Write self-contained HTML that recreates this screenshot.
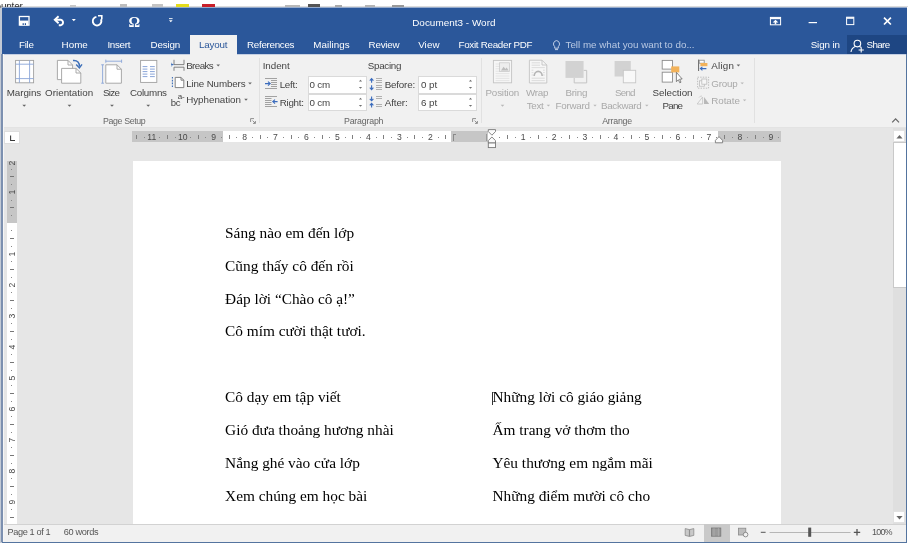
<!DOCTYPE html>
<html><head><meta charset="utf-8"><title>Document3 - Word</title>
<style>
*{margin:0;padding:0;box-sizing:border-box}
html,body{width:916px;height:548px;overflow:hidden;background:#fff}
body{position:relative;font-family:"Liberation Sans",sans-serif;}
.a,.t,.d,svg{position:absolute}
.t{white-space:nowrap;line-height:1;font-family:"Liberation Sans",sans-serif}
.d{white-space:nowrap;line-height:1;font-family:"Liberation Serif",serif;font-size:15.33px;color:#000}

.bx{position:absolute}
.inp{position:absolute;background:#fff;border:1px solid #dadada}
.rn{position:absolute;font-size:8.6px;line-height:1;color:#4a4a4a;white-space:nowrap;font-family:"Liberation Sans",sans-serif;transform:translate(-50%,0)}
.vn{position:absolute;font-size:8.6px;line-height:1;color:#4a4a4a;white-space:nowrap;font-family:"Liberation Sans",sans-serif;transform:translate(-50%,-50%) rotate(-90deg)}

#wrap{position:absolute;left:0;top:0;width:916px;height:548px;overflow:hidden;filter:blur(0.45px)}
</style></head><body><div id="wrap">
<div class="bx" style="left:0px;top:6px;width:908.00px;height:1.00px;background:#dcdcdc;"></div>
<span class="t" style="left:-11.5px;top:1.6px;font-size:10px;color:#333;letter-spacing:-0.2px">Counter</span>
<div class="bx" style="left:176.4px;top:4.4px;width:12.40px;height:3.10px;background:#e4dc1c;"></div>
<div class="bx" style="left:202px;top:4.4px;width:13.00px;height:3.10px;background:#c8202a;"></div>
<div class="bx" style="left:70px;top:4.5px;width:6.00px;height:2.00px;background:#c8c8c8;"></div>
<div class="bx" style="left:120px;top:4px;width:7.00px;height:2.50px;background:#bdbdbd;"></div>
<div class="bx" style="left:152px;top:4px;width:11.00px;height:2.50px;background:#c4c4c4;"></div>
<div class="bx" style="left:285px;top:4.5px;width:15.00px;height:2.00px;background:#b8b8b8;"></div>
<div class="bx" style="left:308px;top:4px;width:12.00px;height:2.50px;background:#555;"></div>
<div class="bx" style="left:335px;top:4.5px;width:7.00px;height:2.00px;background:#aaa;"></div>
<div class="bx" style="left:365px;top:4.5px;width:10.00px;height:2.00px;background:#b5b5b5;"></div>
<div class="bx" style="left:392px;top:4.5px;width:12.00px;height:2.00px;background:#999;"></div>
<div class="bx" style="left:0px;top:8px;width:2.00px;height:535.00px;background:#c3cad5;"></div>
<div class="bx" style="left:2px;top:8px;width:905.40px;height:534.60px;background:#54749f;"></div>
<div class="bx" style="left:1px;top:54px;width:2.00px;height:488.00px;background:#7c90b0;"></div>
<div class="bx" style="left:3px;top:54px;width:0.70px;height:487.60px;background:#f6f6f6;"></div>
<div class="bx" style="left:3.6px;top:7.5px;width:902.60px;height:534.00px;background:#f1f1f1;"></div>
<div class="bx" style="left:2px;top:7px;width:905.00px;height:1.00px;background:#95abcd;"></div>
<div class="bx" style="left:2px;top:8px;width:905.00px;height:46.00px;background:#2b579a;"></div>
<div class="bx" style="left:190px;top:35px;width:47.00px;height:19.00px;background:#f1f1f1;"></div>
<div class="bx" style="left:847px;top:35px;width:60.00px;height:19.00px;background:#1e4683;"></div>
<div class="bx" style="left:4px;top:54px;width:186.00px;height:1.00px;background:#c4cfe3;"></div>
<div class="bx" style="left:237px;top:54px;width:669.00px;height:1.00px;background:#c4cfe3;"></div>
<div class="bx" style="left:3.6px;top:127px;width:902.60px;height:1.00px;background:#e3e3e3;"></div>
<div class="bx" style="left:3.6px;top:128px;width:902.60px;height:396.00px;background:#e6e6e6;"></div>
<div class="bx" style="left:132.6px;top:161px;width:648.70px;height:363.00px;background:#fff;"></div>
<div class="bx" style="left:3.6px;top:524px;width:902.60px;height:17.60px;background:#f1f1f1;"></div>
<div class="bx" style="left:3.6px;top:523.6px;width:902.60px;height:0.80px;background:#d2d2d2;"></div>
<div class="bx" style="left:703.8px;top:524.4px;width:26.00px;height:17.20px;background:#c9c9c9;"></div>
<div class="bx" style="left:258.5px;top:58px;width:1.00px;height:65.00px;background:#e1e1e1;"></div>
<div class="bx" style="left:480.5px;top:58px;width:1.00px;height:65.00px;background:#e1e1e1;"></div>
<div class="bx" style="left:753.5px;top:58px;width:1.00px;height:65.00px;background:#e1e1e1;"></div>
<div class="inp" style="left:307.8px;top:76px;width:59.4px;height:17.6px"></div>
<div class="inp" style="left:307.8px;top:93.6px;width:59.4px;height:17.6px"></div>
<svg style="left:358.09999999999997px;top:79.1px;" width="5" height="11" viewBox="0 0 5 11"><path d="M0.9 2.5 L2.5 0.8 L4.1 2.5Z M0.9 8.1 L2.5 9.8 L4.1 8.1Z" fill="#707070"/></svg>
<svg style="left:358.09999999999997px;top:96.7px;" width="5" height="11" viewBox="0 0 5 11"><path d="M0.9 2.5 L2.5 0.8 L4.1 2.5Z M0.9 8.1 L2.5 9.8 L4.1 8.1Z" fill="#707070"/></svg>
<div class="inp" style="left:418.3px;top:76px;width:58.7px;height:17.6px"></div>
<div class="inp" style="left:418.3px;top:93.6px;width:58.7px;height:17.6px"></div>
<svg style="left:467.9px;top:79.1px;" width="5" height="11" viewBox="0 0 5 11"><path d="M0.9 2.5 L2.5 0.8 L4.1 2.5Z M0.9 8.1 L2.5 9.8 L4.1 8.1Z" fill="#707070"/></svg>
<svg style="left:467.9px;top:96.7px;" width="5" height="11" viewBox="0 0 5 11"><path d="M0.9 2.5 L2.5 0.8 L4.1 2.5Z M0.9 8.1 L2.5 9.8 L4.1 8.1Z" fill="#707070"/></svg>
<div class="bx" style="left:132.2px;top:131.4px;width:649.00px;height:10.50px;background:#fff;"></div>
<div class="bx" style="left:132.2px;top:131.4px;width:91.20px;height:10.50px;background:#c6c6c6;"></div>
<div class="bx" style="left:451.4px;top:131.4px;width:36.50px;height:10.50px;background:#c6c6c6;"></div>
<div class="bx" style="left:718.2px;top:131.4px;width:63.00px;height:10.50px;background:#c6c6c6;"></div>
<div class="bx" style="left:445.3px;top:135px;width:1.00px;height:4.20px;background:#808080;"></div>
<div class="bx" style="left:437.5px;top:136.6px;width:1.00px;height:1.10px;background:#8a8a8a;"></div>
<span class="rn" style="left:430.3px;top:132.8px">2</span>
<div class="bx" style="left:422.1px;top:136.6px;width:1.00px;height:1.10px;background:#8a8a8a;"></div>
<div class="bx" style="left:414.3px;top:135px;width:1.00px;height:4.20px;background:#808080;"></div>
<div class="bx" style="left:406.6px;top:136.6px;width:1.00px;height:1.10px;background:#8a8a8a;"></div>
<span class="rn" style="left:399.4px;top:132.8px">3</span>
<div class="bx" style="left:391.1px;top:136.6px;width:1.00px;height:1.10px;background:#8a8a8a;"></div>
<div class="bx" style="left:383.4px;top:135px;width:1.00px;height:4.20px;background:#808080;"></div>
<div class="bx" style="left:375.6px;top:136.6px;width:1.00px;height:1.10px;background:#8a8a8a;"></div>
<span class="rn" style="left:368.4px;top:132.8px">4</span>
<div class="bx" style="left:360.2px;top:136.6px;width:1.00px;height:1.10px;background:#8a8a8a;"></div>
<div class="bx" style="left:352.4px;top:135px;width:1.00px;height:4.20px;background:#808080;"></div>
<div class="bx" style="left:344.7px;top:136.6px;width:1.00px;height:1.10px;background:#8a8a8a;"></div>
<span class="rn" style="left:337.4px;top:132.8px">5</span>
<div class="bx" style="left:329.2px;top:136.6px;width:1.00px;height:1.10px;background:#8a8a8a;"></div>
<div class="bx" style="left:321.5px;top:135px;width:1.00px;height:4.20px;background:#808080;"></div>
<div class="bx" style="left:313.7px;top:136.6px;width:1.00px;height:1.10px;background:#8a8a8a;"></div>
<span class="rn" style="left:306.5px;top:132.8px">6</span>
<div class="bx" style="left:298.3px;top:136.6px;width:1.00px;height:1.10px;background:#8a8a8a;"></div>
<div class="bx" style="left:290.5px;top:135px;width:1.00px;height:4.20px;background:#808080;"></div>
<div class="bx" style="left:282.8px;top:136.6px;width:1.00px;height:1.10px;background:#8a8a8a;"></div>
<span class="rn" style="left:275.5px;top:132.8px">7</span>
<div class="bx" style="left:267.3px;top:136.6px;width:1.00px;height:1.10px;background:#8a8a8a;"></div>
<div class="bx" style="left:259.6px;top:135px;width:1.00px;height:4.20px;background:#808080;"></div>
<div class="bx" style="left:251.8px;top:136.6px;width:1.00px;height:1.10px;background:#8a8a8a;"></div>
<span class="rn" style="left:244.6px;top:132.8px">8</span>
<div class="bx" style="left:236.4px;top:136.6px;width:1.00px;height:1.10px;background:#8a8a8a;"></div>
<div class="bx" style="left:228.6px;top:135px;width:1.00px;height:4.20px;background:#808080;"></div>
<div class="bx" style="left:220.9px;top:136.6px;width:1.00px;height:1.10px;background:#8a8a8a;"></div>
<span class="rn" style="left:213.6px;top:132.8px">9</span>
<div class="bx" style="left:205.4px;top:136.6px;width:1.00px;height:1.10px;background:#8a8a8a;"></div>
<div class="bx" style="left:197.7px;top:135px;width:1.00px;height:4.20px;background:#808080;"></div>
<div class="bx" style="left:189.9px;top:136.6px;width:1.00px;height:1.10px;background:#8a8a8a;"></div>
<span class="rn" style="left:182.7px;top:132.8px">10</span>
<div class="bx" style="left:174.5px;top:136.6px;width:1.00px;height:1.10px;background:#8a8a8a;"></div>
<div class="bx" style="left:166.7px;top:135px;width:1.00px;height:4.20px;background:#808080;"></div>
<div class="bx" style="left:159.0px;top:136.6px;width:1.00px;height:1.10px;background:#8a8a8a;"></div>
<span class="rn" style="left:151.8px;top:132.8px">11</span>
<div class="bx" style="left:143.5px;top:136.6px;width:1.00px;height:1.10px;background:#8a8a8a;"></div>
<div class="bx" style="left:135.8px;top:135px;width:1.00px;height:4.20px;background:#808080;"></div>
<div class="bx" style="left:499.4px;top:136.6px;width:1.00px;height:1.10px;background:#8a8a8a;"></div>
<div class="bx" style="left:507.2px;top:135px;width:1.00px;height:4.20px;background:#808080;"></div>
<div class="bx" style="left:514.9px;top:136.6px;width:1.00px;height:1.10px;background:#8a8a8a;"></div>
<span class="rn" style="left:523.1px;top:132.8px">1</span>
<div class="bx" style="left:530.4px;top:136.6px;width:1.00px;height:1.10px;background:#8a8a8a;"></div>
<div class="bx" style="left:538.1px;top:135px;width:1.00px;height:4.20px;background:#808080;"></div>
<div class="bx" style="left:545.9px;top:136.6px;width:1.00px;height:1.10px;background:#8a8a8a;"></div>
<span class="rn" style="left:554.1px;top:132.8px">2</span>
<div class="bx" style="left:561.3px;top:136.6px;width:1.00px;height:1.10px;background:#8a8a8a;"></div>
<div class="bx" style="left:569.1px;top:135px;width:1.00px;height:4.20px;background:#808080;"></div>
<div class="bx" style="left:576.8px;top:136.6px;width:1.00px;height:1.10px;background:#8a8a8a;"></div>
<span class="rn" style="left:585.0px;top:132.8px">3</span>
<div class="bx" style="left:592.3px;top:136.6px;width:1.00px;height:1.10px;background:#8a8a8a;"></div>
<div class="bx" style="left:600.0px;top:135px;width:1.00px;height:4.20px;background:#808080;"></div>
<div class="bx" style="left:607.8px;top:136.6px;width:1.00px;height:1.10px;background:#8a8a8a;"></div>
<span class="rn" style="left:616.0px;top:132.8px">4</span>
<div class="bx" style="left:623.2px;top:136.6px;width:1.00px;height:1.10px;background:#8a8a8a;"></div>
<div class="bx" style="left:631.0px;top:135px;width:1.00px;height:4.20px;background:#808080;"></div>
<div class="bx" style="left:638.7px;top:136.6px;width:1.00px;height:1.10px;background:#8a8a8a;"></div>
<span class="rn" style="left:647.0px;top:132.8px">5</span>
<div class="bx" style="left:654.2px;top:136.6px;width:1.00px;height:1.10px;background:#8a8a8a;"></div>
<div class="bx" style="left:661.9px;top:135px;width:1.00px;height:4.20px;background:#808080;"></div>
<div class="bx" style="left:669.7px;top:136.6px;width:1.00px;height:1.10px;background:#8a8a8a;"></div>
<span class="rn" style="left:677.9px;top:132.8px">6</span>
<div class="bx" style="left:685.1px;top:136.6px;width:1.00px;height:1.10px;background:#8a8a8a;"></div>
<div class="bx" style="left:692.9px;top:135px;width:1.00px;height:4.20px;background:#808080;"></div>
<div class="bx" style="left:700.6px;top:136.6px;width:1.00px;height:1.10px;background:#8a8a8a;"></div>
<span class="rn" style="left:708.9px;top:132.8px">7</span>
<div class="bx" style="left:716.1px;top:136.6px;width:1.00px;height:1.10px;background:#8a8a8a;"></div>
<div class="bx" style="left:723.8px;top:135px;width:1.00px;height:4.20px;background:#808080;"></div>
<div class="bx" style="left:731.6px;top:136.6px;width:1.00px;height:1.10px;background:#8a8a8a;"></div>
<span class="rn" style="left:739.8px;top:132.8px">8</span>
<div class="bx" style="left:747.0px;top:136.6px;width:1.00px;height:1.10px;background:#8a8a8a;"></div>
<div class="bx" style="left:754.8px;top:135px;width:1.00px;height:4.20px;background:#808080;"></div>
<div class="bx" style="left:762.5px;top:136.6px;width:1.00px;height:1.10px;background:#8a8a8a;"></div>
<span class="rn" style="left:770.8px;top:132.8px">9</span>
<div class="bx" style="left:778.0px;top:136.6px;width:1.00px;height:1.10px;background:#8a8a8a;"></div>
<div class="bx" style="left:6.6px;top:160.5px;width:10.40px;height:363.50px;background:#fff;"></div>
<div class="bx" style="left:6.6px;top:160.5px;width:10.40px;height:62.50px;background:#c6c6c6;"></div>
<span class="vn" style="left:11.8px;top:163.4px">2</span>
<div class="bx" style="left:11.3px;top:168.5px;width:1.10px;height:1.00px;background:#888;"></div>
<div class="bx" style="left:9.6px;top:176.3px;width:4.40px;height:1.00px;background:#777;"></div>
<div class="bx" style="left:11.3px;top:184.0px;width:1.10px;height:1.00px;background:#888;"></div>
<span class="vn" style="left:11.8px;top:192.2px">1</span>
<div class="bx" style="left:11.3px;top:199.5px;width:1.10px;height:1.00px;background:#888;"></div>
<div class="bx" style="left:9.6px;top:207.2px;width:4.40px;height:1.00px;background:#777;"></div>
<div class="bx" style="left:11.3px;top:215.0px;width:1.10px;height:1.00px;background:#888;"></div>
<div class="bx" style="left:11.3px;top:230.4px;width:1.10px;height:1.00px;background:#888;"></div>
<div class="bx" style="left:9.6px;top:238.2px;width:4.40px;height:1.00px;background:#777;"></div>
<div class="bx" style="left:11.3px;top:245.9px;width:1.10px;height:1.00px;background:#888;"></div>
<span class="vn" style="left:11.8px;top:254.1px">1</span>
<div class="bx" style="left:11.3px;top:261.4px;width:1.10px;height:1.00px;background:#888;"></div>
<div class="bx" style="left:9.6px;top:269.1px;width:4.40px;height:1.00px;background:#777;"></div>
<div class="bx" style="left:11.3px;top:276.9px;width:1.10px;height:1.00px;background:#888;"></div>
<span class="vn" style="left:11.8px;top:285.1px">2</span>
<div class="bx" style="left:11.3px;top:292.3px;width:1.10px;height:1.00px;background:#888;"></div>
<div class="bx" style="left:9.6px;top:300.1px;width:4.40px;height:1.00px;background:#777;"></div>
<div class="bx" style="left:11.3px;top:307.8px;width:1.10px;height:1.00px;background:#888;"></div>
<span class="vn" style="left:11.8px;top:316.0px">3</span>
<div class="bx" style="left:11.3px;top:323.3px;width:1.10px;height:1.00px;background:#888;"></div>
<div class="bx" style="left:9.6px;top:331.0px;width:4.40px;height:1.00px;background:#777;"></div>
<div class="bx" style="left:11.3px;top:338.8px;width:1.10px;height:1.00px;background:#888;"></div>
<span class="vn" style="left:11.8px;top:347.0px">4</span>
<div class="bx" style="left:11.3px;top:354.2px;width:1.10px;height:1.00px;background:#888;"></div>
<div class="bx" style="left:9.6px;top:362.0px;width:4.40px;height:1.00px;background:#777;"></div>
<div class="bx" style="left:11.3px;top:369.7px;width:1.10px;height:1.00px;background:#888;"></div>
<span class="vn" style="left:11.8px;top:377.9px">5</span>
<div class="bx" style="left:11.3px;top:385.2px;width:1.10px;height:1.00px;background:#888;"></div>
<div class="bx" style="left:9.6px;top:392.9px;width:4.40px;height:1.00px;background:#777;"></div>
<div class="bx" style="left:11.3px;top:400.7px;width:1.10px;height:1.00px;background:#888;"></div>
<span class="vn" style="left:11.8px;top:408.9px">6</span>
<div class="bx" style="left:11.3px;top:416.1px;width:1.10px;height:1.00px;background:#888;"></div>
<div class="bx" style="left:9.6px;top:423.9px;width:4.40px;height:1.00px;background:#777;"></div>
<div class="bx" style="left:11.3px;top:431.6px;width:1.10px;height:1.00px;background:#888;"></div>
<span class="vn" style="left:11.8px;top:439.9px">7</span>
<div class="bx" style="left:11.3px;top:447.1px;width:1.10px;height:1.00px;background:#888;"></div>
<div class="bx" style="left:9.6px;top:454.8px;width:4.40px;height:1.00px;background:#777;"></div>
<div class="bx" style="left:11.3px;top:462.6px;width:1.10px;height:1.00px;background:#888;"></div>
<span class="vn" style="left:11.8px;top:470.8px">8</span>
<div class="bx" style="left:11.3px;top:478.0px;width:1.10px;height:1.00px;background:#888;"></div>
<div class="bx" style="left:9.6px;top:485.8px;width:4.40px;height:1.00px;background:#777;"></div>
<div class="bx" style="left:11.3px;top:493.5px;width:1.10px;height:1.00px;background:#888;"></div>
<span class="vn" style="left:11.8px;top:501.8px">9</span>
<div class="bx" style="left:11.3px;top:509.0px;width:1.10px;height:1.00px;background:#888;"></div>
<div class="bx" style="left:9.6px;top:516.7px;width:4.40px;height:1.00px;background:#777;"></div>
<div class="bx" style="left:4px;top:130.6px;width:15.80px;height:13.20px;background:#fff;border:1px solid #dedede"></div>
<svg style="left:8.6px;top:133.8px;" width="8" height="8" viewBox="0 0 8 8"><path d="M1.6 1.6 V6.4 H6" fill="none" stroke="#3a3a3a" stroke-width="1.05"/></svg>
<svg style="left:487px;top:128px;" width="10" height="21" viewBox="0 0 10 21"><path d="M1.3 1.6 H8.5 V3.6 L4.9 7.2 L1.3 3.6Z" fill="#fbfbfb" stroke="#777" stroke-width="0.9"/>
<path d="M1.3 15 V12.6 L4.9 9 L8.5 12.6 V15Z" fill="#fbfbfb" stroke="#777" stroke-width="0.9"/>
<rect x="1.3" y="15" width="7.2" height="4.6" fill="#fbfbfb" stroke="#777" stroke-width="0.9"/></svg>
<svg style="left:714px;top:134px;" width="10" height="10" viewBox="0 0 10 10"><path d="M1.4 8.8 V6.4 L5 2.6 L8.6 6.4 V8.8Z" fill="#fbfbfb" stroke="#777" stroke-width="0.9"/></svg>
<div class="bx" style="left:452.8px;top:134px;width:1.00px;height:7.00px;background:#8a8a8a;"></div>
<div class="bx" style="left:452.8px;top:134px;width:3.20px;height:1.00px;background:#8a8a8a;"></div>
<div class="bx" style="left:486px;top:134px;width:1.00px;height:7.00px;background:#9a9a9a;"></div>
<div class="bx" style="left:892.6px;top:128px;width:13.60px;height:396.00px;background:#dfdfdf;"></div>
<div class="bx" style="left:893.4px;top:130px;width:12.00px;height:12.40px;background:#fff;border:1px solid #e2e2e2"></div>
<div class="bx" style="left:893.4px;top:142.4px;width:12.80px;height:145.60px;background:#fff;border:1px solid #c9c9c9;border-right:none"></div>
<div class="bx" style="left:893.4px;top:511px;width:12.00px;height:11.60px;background:#fff;border:1px solid #e2e2e2"></div>
<svg style="left:896px;top:133.5px;" width="7" height="6" viewBox="0 0 7 6"><path d="M0.4 4.6 L3.5 1 L6.6 4.6Z" fill="#666"/></svg>
<svg style="left:896px;top:514.5px;" width="7" height="6" viewBox="0 0 7 6"><path d="M0.4 1 L3.5 4.6 L6.6 1Z" fill="#666"/></svg>
<span class="t" style="left:412.2px;top:17.6px;font-size:9.9px;color:#fff;letter-spacing:0.04px;">Document3 - Word</span>
<span class="t" style="left:18.9px;top:40.1px;font-size:9.8px;color:#fff;letter-spacing:-0.23px;">File</span>
<span class="t" style="left:61.6px;top:40.1px;font-size:9.8px;color:#fff;letter-spacing:0.02px;">Home</span>
<span class="t" style="left:107.4px;top:40.1px;font-size:9.8px;color:#fff;letter-spacing:-0.28px;">Insert</span>
<span class="t" style="left:150.6px;top:40.1px;font-size:9.8px;color:#fff;letter-spacing:-0.18px;">Design</span>
<span class="t" style="left:199.1px;top:40.1px;font-size:9.8px;color:#2b579a;letter-spacing:-0.22px;">Layout</span>
<span class="t" style="left:247.0px;top:40.1px;font-size:9.8px;color:#fff;letter-spacing:-0.29px;">References</span>
<span class="t" style="left:313.2px;top:40.1px;font-size:9.8px;color:#fff;letter-spacing:0.08px;">Mailings</span>
<span class="t" style="left:368.5px;top:40.1px;font-size:9.8px;color:#fff;letter-spacing:-0.19px;">Review</span>
<span class="t" style="left:418.2px;top:40.1px;font-size:9.8px;color:#fff;letter-spacing:0.08px;">View</span>
<span class="t" style="left:458.5px;top:40.1px;font-size:9.8px;color:#fff;letter-spacing:-0.29px;">Foxit Reader PDF</span>
<span class="t" style="left:565.5px;top:40.1px;font-size:9.8px;color:#b9c9e3;letter-spacing:-0.00px;">Tell me what you want to do...</span>
<span class="t" style="left:810.7px;top:40.1px;font-size:9.8px;color:#fff;letter-spacing:-0.11px;">Sign in</span>
<span class="t" style="left:866.5px;top:40.1px;font-size:9.8px;color:#fff;letter-spacing:-0.61px;">Share</span>
<span class="t" style="left:6.7px;top:88.2px;font-size:9.8px;color:#444;letter-spacing:-0.06px;">Margins</span>
<span class="t" style="left:45.0px;top:88.2px;font-size:9.8px;color:#444;letter-spacing:0.03px;">Orientation</span>
<span class="t" style="left:103.0px;top:88.2px;font-size:9.8px;color:#444;letter-spacing:-0.69px;">Size</span>
<span class="t" style="left:130.0px;top:88.2px;font-size:9.8px;color:#444;letter-spacing:-0.28px;">Columns</span>
<span class="t" style="left:186.2px;top:61.2px;font-size:9.8px;color:#444;letter-spacing:-0.60px;">Breaks</span>
<span class="t" style="left:186.2px;top:79.2px;font-size:9.8px;color:#444;letter-spacing:-0.15px;">Line Numbers</span>
<span class="t" style="left:186.2px;top:95.4px;font-size:9.8px;color:#444;letter-spacing:-0.02px;">Hyphenation</span>
<span class="t" style="left:103.0px;top:116.6px;font-size:8.8px;color:#666;letter-spacing:-0.36px;">Page Setup</span>
<span class="t" style="left:262.7px;top:61.2px;font-size:9.8px;color:#444;letter-spacing:-0.05px;">Indent</span>
<span class="t" style="left:279.7px;top:79.9px;font-size:9.8px;color:#444;letter-spacing:-0.27px;">Left:</span>
<span class="t" style="left:279.7px;top:97.9px;font-size:9.8px;color:#444;letter-spacing:-0.26px;">Right:</span>
<span class="t" style="left:309.5px;top:79.9px;font-size:9.8px;color:#444;letter-spacing:-0.18px;">0 cm</span>
<span class="t" style="left:309.5px;top:97.9px;font-size:9.8px;color:#444;letter-spacing:-0.18px;">0 cm</span>
<span class="t" style="left:367.7px;top:61.2px;font-size:9.8px;color:#444;letter-spacing:-0.27px;">Spacing</span>
<span class="t" style="left:384.7px;top:79.9px;font-size:9.8px;color:#444;letter-spacing:-0.18px;">Before:</span>
<span class="t" style="left:384.7px;top:97.9px;font-size:9.8px;color:#444;letter-spacing:-0.08px;">After:</span>
<span class="t" style="left:421.0px;top:79.9px;font-size:9.8px;color:#444;letter-spacing:-0.05px;">0 pt</span>
<span class="t" style="left:421.0px;top:97.9px;font-size:9.8px;color:#444;letter-spacing:-0.05px;">6 pt</span>
<span class="t" style="left:344.0px;top:116.6px;font-size:8.8px;color:#666;letter-spacing:-0.20px;">Paragraph</span>
<span class="t" style="left:485.5px;top:88.2px;font-size:9.8px;color:#a9a9a9;letter-spacing:-0.17px;">Position</span>
<span class="t" style="left:526.0px;top:88.2px;font-size:9.8px;color:#a9a9a9;letter-spacing:-0.24px;">Wrap</span>
<span class="t" style="left:526.7px;top:101.2px;font-size:9.8px;color:#a9a9a9;letter-spacing:-0.32px;">Text</span>
<span class="t" style="left:565.5px;top:88.2px;font-size:9.8px;color:#a9a9a9;letter-spacing:-0.22px;">Bring</span>
<span class="t" style="left:555.5px;top:101.2px;font-size:9.8px;color:#a9a9a9;letter-spacing:-0.24px;">Forward</span>
<span class="t" style="left:615.0px;top:88.2px;font-size:9.8px;color:#a9a9a9;letter-spacing:-0.80px;">Send</span>
<span class="t" style="left:601.0px;top:101.2px;font-size:9.8px;color:#a9a9a9;letter-spacing:-0.33px;">Backward</span>
<span class="t" style="left:652.5px;top:88.2px;font-size:9.8px;color:#444;letter-spacing:-0.04px;">Selection</span>
<span class="t" style="left:662.5px;top:101.2px;font-size:9.8px;color:#444;letter-spacing:-0.80px;">Pane</span>
<span class="t" style="left:602.2px;top:116.6px;font-size:8.8px;color:#666;letter-spacing:-0.22px;">Arrange</span>
<span class="t" style="left:711.2px;top:61.2px;font-size:9.8px;color:#444;letter-spacing:0.25px;">Align</span>
<span class="t" style="left:711.2px;top:79.2px;font-size:9.8px;color:#a9a9a9;letter-spacing:-0.18px;">Group</span>
<span class="t" style="left:711.2px;top:96.2px;font-size:9.8px;color:#a9a9a9;letter-spacing:-0.02px;">Rotate</span>
<span class="t" style="left:7.5px;top:528.4px;font-size:9.2px;color:#555;letter-spacing:-0.38px;">Page 1 of 1</span>
<span class="t" style="left:63.7px;top:528.4px;font-size:9.2px;color:#555;letter-spacing:-0.33px;">60 words</span>
<span class="t" style="left:872.0px;top:528.0px;font-size:9.0px;color:#555;letter-spacing:-0.80px;">100%</span>
<span class="d" style="left:225.1px;top:225.3px">Sáng nào em đến lớp</span>
<span class="d" style="left:225.1px;top:257.9px">Cũng thấy cô đến rồi</span>
<span class="d" style="left:225.1px;top:290.5px">Đáp lời “Chào cô ạ!”</span>
<span class="d" style="left:225.1px;top:323.1px">Cô mím cười thật tươi.</span>
<span class="d" style="left:225.1px;top:389.3px">Cô dạy em tập viết</span>
<span class="d" style="left:225.1px;top:422.2px">Gió đưa thoảng hương nhài</span>
<span class="d" style="left:225.1px;top:454.8px">Nắng ghé vào cửa lớp</span>
<span class="d" style="left:225.1px;top:487.8px">Xem chúng em học bài</span>
<span class="d" style="left:492.5px;top:389.3px">Những lời cô giáo giảng</span>
<span class="d" style="left:492.5px;top:422.2px">Ấm trang vở thơm tho</span>
<span class="d" style="left:492.5px;top:454.8px">Yêu thương em ngắm mãi</span>
<span class="d" style="left:492.5px;top:487.8px">Những điểm mười cô cho</span>
<div class="bx" style="left:491.7px;top:391.6px;width:1.00px;height:13.40px;background:#333;"></div>
<svg style="left:0;top:0" width="916" height="548" viewBox="0 0 916 548"><rect x="19.4" y="16.5" width="9.60" height="8.60" stroke="#fff" fill="none" stroke-width="1.3" /><rect x="20" y="20.6" width="8.40" height="4.80" stroke="none" fill="#fff" stroke-width="1" /><rect x="22.6" y="23.2" width="1.20" height="1.90" stroke="none" fill="#2b579a" stroke-width="1" /><rect x="24.8" y="23.2" width="1.20" height="1.90" stroke="none" fill="#2b579a" stroke-width="1" /><path d="M58.6 16.2 L54.8 19.7 L58.6 23.2" stroke="#fff" fill="none" stroke-width="1.9" /><path d="M55.4 19.7 H60.6 A3.8 3.0 0 0 1 60.6 25.3 H58.8" stroke="#fff" fill="none" stroke-width="1.9" /><path d="M71.8 19.099999999999998 H75.8 L73.8 21.3Z" stroke="none" fill="#fff" stroke-width="1" /><path d="M100.9 19.2 A4.3 4.3 0 1 1 96.4 16.9" stroke="#fff" fill="none" stroke-width="1.9" /><path d="M98 15.8 H101.8 V19.6" stroke="#fff" fill="none" stroke-width="1.6" /><rect x="169" y="18.2" width="3.60" height="0.90" stroke="none" fill="#fff" stroke-width="1" /><path d="M169.0 20.2 H172.60000000000002 L170.8 22.2Z" stroke="none" fill="#fff" stroke-width="1" /><rect x="770.4" y="17.4" width="10.20" height="7.40" stroke="#fff" fill="none" stroke-width="1" /><rect x="770.4" y="17.4" width="10.20" height="1.80" stroke="none" fill="#fff" stroke-width="1" /><path d="M775.5 19.8 L772.6 22.6 H774.7 V24.2 H776.3 V22.6 H778.4Z" stroke="none" fill="#fff" stroke-width="1" /><rect x="808.6" y="22" width="8.40" height="1.20" stroke="none" fill="#fff" stroke-width="1" /><rect x="846.6" y="17.2" width="7.20" height="7.40" stroke="#fff" fill="none" stroke-width="1" /><rect x="846.6" y="17.2" width="7.20" height="1.60" stroke="none" fill="#fff" stroke-width="1" /><path d="M884 17.7 L890.9 24.5 M890.9 17.7 L884 24.5" stroke="#fff" fill="none" stroke-width="1.7" /><path d="M556.5 40.6 A3.4 3.4 0 0 1 558.3 46.6 V48.2 H554.7 V46.6 A3.4 3.4 0 0 1 556.5 40.6Z" stroke="#cfdaee" fill="none" stroke-width="0.9" /><path d="M555 49.6 H558" stroke="#cfdaee" fill="none" stroke-width="0.9" /><circle cx="857.4" cy="43.6" r="3.3" stroke="#fff" fill="none" stroke-width="1.1"/><path d="M851 52 C851.4 48.2 853.6 47 855.4 46.4 M859.4 46.4 C860.2 46.7 860.8 47 861.4 47.5" stroke="#fff" fill="none" stroke-width="1.1" /><path d="M861.2 47.4 V52.6 M858.6 50 H863.8" stroke="#fff" fill="none" stroke-width="1.1" /><path d="M22.3 104.75 H26.099999999999998 L24.2 106.85Z" stroke="none" fill="#666" stroke-width="1" /><path d="M67.6 104.75 H71.4 L69.5 106.85Z" stroke="none" fill="#666" stroke-width="1" /><path d="M110.1 104.75 H113.9 L112 106.85Z" stroke="none" fill="#666" stroke-width="1" /><path d="M146.29999999999998 104.75 H150.1 L148.2 106.85Z" stroke="none" fill="#666" stroke-width="1" /><path d="M216.39999999999998 64.4 H220.0 L218.2 66.4Z" stroke="none" fill="#666" stroke-width="1" /><path d="M248.2 82.4 H251.8 L250 84.4Z" stroke="none" fill="#666" stroke-width="1" /><path d="M244.2 98.8 H247.8 L246 100.8Z" stroke="none" fill="#666" stroke-width="1" /><path d="M500.7 104.8 H504.3 L502.5 106.8Z" stroke="none" fill="#b8b8b8" stroke-width="1" /><path d="M546.6999999999999 104.64999999999999 H550.1 L548.4 106.55Z" stroke="none" fill="#b8b8b8" stroke-width="1" /><path d="M593.3 104.64999999999999 H596.7 L595 106.55Z" stroke="none" fill="#b8b8b8" stroke-width="1" /><path d="M645.0999999999999 104.64999999999999 H648.5 L646.8 106.55Z" stroke="none" fill="#b8b8b8" stroke-width="1" /><path d="M736.6 64.4 H740.1999999999999 L738.4 66.4Z" stroke="none" fill="#666" stroke-width="1" /><path d="M740.5 82.45 H743.9000000000001 L742.2 84.35000000000001Z" stroke="none" fill="#b8b8b8" stroke-width="1" /><path d="M742.9 99.45 H746.3000000000001 L744.6 101.35000000000001Z" stroke="none" fill="#b8b8b8" stroke-width="1" /><path d="M250.6 122.0 V118.6 H254.0" stroke="#777" fill="none" stroke-width="0.8" /><path d="M252.6 120.6 L255.2 123.19999999999999 M255.4 121.0 V123.39999999999999 H253.0" stroke="#777" fill="none" stroke-width="0.8" /><path d="M472.6 122.0 V118.6 H476.0" stroke="#777" fill="none" stroke-width="0.8" /><path d="M474.6 120.6 L477.20000000000005 123.19999999999999 M477.40000000000003 121.0 V123.39999999999999 H475.0" stroke="#777" fill="none" stroke-width="0.8" /><path d="M892.2 122.4 L895.6 118.8 L899 122.4" stroke="#666" fill="none" stroke-width="1.2" /><rect x="15.6" y="60.4" width="18.00" height="22.40" stroke="#a0a0a0" fill="#fff" stroke-width="0.9" /><path d="M19.4 60.4 V82.8 M29.6 60.4 V82.8 M15.6 64.2 H33.6 M15.6 78.6 H33.6" stroke="#8aa5d8" fill="none" stroke-width="0.9" /><path d="M57.4 60.4 H68 L72.6 65 V79.6 H57.4Z" stroke="#a0a0a0" fill="#fff" stroke-width="0.9" /><path d="M68 60.4 V65 H72.6" stroke="#a0a0a0" fill="none" stroke-width="0.9" /><path d="M61.6 68.4 H76 L80.8 73 V83.2 H61.6Z" stroke="#a0a0a0" fill="#fff" stroke-width="0.9" /><path d="M76 68.4 V73 H80.8" stroke="#a0a0a0" fill="none" stroke-width="0.9" /><path d="M73 60.6 C77.6 60.2 79.6 62.6 79.4 66.6" stroke="#3d6fb8" fill="none" stroke-width="1.5" /><path d="M76.2 64.6 L79.4 68 L82 64.4" stroke="#3d6fb8" fill="none" stroke-width="1.4" /><path d="M105.8 64.8 H117 L121.4 69.2 V83.2 H105.8Z" stroke="#a0a0a0" fill="#fff" stroke-width="0.9" /><path d="M117 64.8 V69.2 H121.4" stroke="#a0a0a0" fill="none" stroke-width="0.9" /><path d="M105.8 61.2 H121.6 M105.8 59.6 V62.8 M121.6 59.6 V62.8 M102.6 64.8 V83.2 M101.2 64.8 H104 M101.2 83.2 H104" stroke="#8aa5d8" fill="none" stroke-width="0.9" /><rect x="140.6" y="60.4" width="16.20" height="22.00" stroke="#a0a0a0" fill="#fff" stroke-width="0.9" /><path d="M142.6 66.6 H147.4 M150 66.6 H154.8" stroke="#8aa5d8" fill="none" stroke-width="1" /><path d="M142.6 69.1 H147.4 M150 69.1 H154.8" stroke="#8aa5d8" fill="none" stroke-width="1" /><path d="M142.6 71.6 H147.4 M150 71.6 H154.8" stroke="#8aa5d8" fill="none" stroke-width="1" /><path d="M142.6 74.1 H147.4 M150 74.1 H154.8" stroke="#8aa5d8" fill="none" stroke-width="1" /><path d="M142.6 76.6 H147.4 M150 76.6 H154.8" stroke="#8aa5d8" fill="none" stroke-width="1" /><path d="M174 59.8 V64.6 H184 V59.8 M174 70.8 V67.2 H184 V70.8" stroke="#777" fill="none" stroke-width="0.9" /><path d="M171 64.6 H173.6" stroke="#3d6fb8" fill="none" stroke-width="1" /><path d="M171.2 63 L172.8 64.6 L171.2 66.2" stroke="#3d6fb8" fill="none" stroke-width="0.8" /><path d="M175.2 77.4 H181 L183.8 80.2 V87.6 H175.2Z" stroke="#777" fill="#fff" stroke-width="0.9" /><path d="M181 77.4 V80.2 H183.8" stroke="#777" fill="none" stroke-width="0.9" /><path d="M172.4 77 V87.4" stroke="#3d6fb8" fill="none" stroke-width="1.1" stroke-dasharray="1.6 1.2"/><path d="M265 78.5 H277 M271 80.5 H277 M271 82.5 H277 M271 84.5 H277 M271 86.5 H277 M265 88.5 H277" stroke="#a2a2a2" fill="none" stroke-width="1" /><path d="M265 83.6 H270 M268 81.6 L270.2 83.6 L268 85.6" stroke="#3b6cbd" fill="none" stroke-width="1.1" /><path d="M265 96.5 H277 M265 98.5 H271.5 M265 100.5 H271.5 M265 102.5 H271.5 M265 104.5 H271.5 M265 106.5 H277" stroke="#a2a2a2" fill="none" stroke-width="1" /><path d="M273 101.6 H277.6 M275 99.6 L272.8 101.6 L275 103.6" stroke="#3b6cbd" fill="none" stroke-width="1.1" /><path d="M376 78.5 H382 M376 80.5 H382 M376 82.5 H382 M376 85.5 H382 M376 87.5 H382 M376 89.5 H382" stroke="#b0b0b0" fill="none" stroke-width="1" /><path d="M371.6 78.8 V82.8 M371.6 85.2 V89.4 M369.8 80.6 L371.6 78.6 L373.4 80.6 M369.8 87.6 L371.6 89.6 L373.4 87.6" stroke="#3b6cbd" fill="none" stroke-width="1.1" /><path d="M376 96.5 H382 M376 98.5 H382 M376 104.5 H382 M376 106.5 H382" stroke="#b0b0b0" fill="none" stroke-width="1" /><path d="M371.6 96.6 V100.4 M369.8 98.8 L371.6 100.8 L373.4 98.8 M371.6 107.6 V103.6 M369.8 105.4 L371.6 103.4 L373.4 105.4" stroke="#3b6cbd" fill="none" stroke-width="1.1" /><rect x="493.4" y="60.4" width="18.20" height="22.40" stroke="#c4c4c4" fill="#f6f6f6" stroke-width="0.9" /><path d="M495.6 64 H509.4" stroke="#dcdcdc" fill="none" stroke-width="0.7" /><path d="M495.6 66.4 H509.4" stroke="#dcdcdc" fill="none" stroke-width="0.7" /><path d="M495.6 68.8 H509.4" stroke="#dcdcdc" fill="none" stroke-width="0.7" /><path d="M495.6 71.2 H509.4" stroke="#dcdcdc" fill="none" stroke-width="0.7" /><path d="M495.6 73.6 H509.4" stroke="#dcdcdc" fill="none" stroke-width="0.7" /><path d="M495.6 76 H509.4" stroke="#dcdcdc" fill="none" stroke-width="0.7" /><path d="M495.6 78.4 H509.4" stroke="#dcdcdc" fill="none" stroke-width="0.7" /><path d="M495.6 80.6 H509.4" stroke="#dcdcdc" fill="none" stroke-width="0.7" /><rect x="499.6" y="62.8" width="9.80" height="8.80" stroke="#c8c8c8" fill="#ededed" stroke-width="0.7" /><path d="M501 70.6 L503.6 66.8 L505.4 69 L506.6 67.6 L508.6 70.6Z" stroke="none" fill="#bdbdbd" stroke-width="1" /><path d="M529.4 60.2 H542 L546.8 65 V83 H529.4Z" stroke="#c4c4c4" fill="#f6f6f6" stroke-width="0.9" /><path d="M542 60.2 V65 H546.8" stroke="#c4c4c4" fill="none" stroke-width="0.9" /><path d="M531.6 62.8 H540" stroke="#d4d4d4" fill="none" stroke-width="0.8" /><path d="M531.6 65.2 H540" stroke="#d4d4d4" fill="none" stroke-width="0.8" /><path d="M531.6 67.6 H544.8" stroke="#d4d4d4" fill="none" stroke-width="0.8" /><path d="M531.6 78.2 H544.8" stroke="#d4d4d4" fill="none" stroke-width="0.8" /><path d="M531.6 80.6 H544.8" stroke="#d4d4d4" fill="none" stroke-width="0.8" /><path d="M531.6 70.2 H533.4 M543 70.2 H544.8" stroke="#d4d4d4" fill="none" stroke-width="0.8" /><path d="M531.6 72.6 H533.4 M543 72.6 H544.8" stroke="#d4d4d4" fill="none" stroke-width="0.8" /><path d="M531.6 75 H533.4 M543 75 H544.8" stroke="#d4d4d4" fill="none" stroke-width="0.8" /><path d="M534.2 76 A4 4.6 0 0 1 542.2 76" stroke="#b4b4b4" fill="none" stroke-width="1.6" /><path d="M574.2 78 V82.9 H586.7 V70.4 H583.6" stroke="#c0c0c0" fill="none" stroke-width="0.9" /><rect x="565.5" y="61" width="18.10" height="16.90" stroke="none" fill="#d2d2d2" stroke-width="1" /><rect x="614.6" y="61" width="16.20" height="15.50" stroke="none" fill="#d2d2d2" stroke-width="1" /><rect x="623.3" y="70.3" width="12.40" height="12.50" stroke="#c6c6c6" fill="#f8f8f8" stroke-width="0.9" /><rect x="662.2" y="60.4" width="10.30" height="8.70" stroke="#8c8c8c" fill="#fff" stroke-width="0.9" /><rect x="662.2" y="72.2" width="10.30" height="9.90" stroke="#8c8c8c" fill="#fff" stroke-width="0.9" /><rect x="671.2" y="66.4" width="8.10" height="6.00" stroke="none" fill="#f2b25a" stroke-width="1" /><path d="M676.4 72.4 V81.6 L678.4 79.8 L679.8 82.8 L681 82.2 L679.6 79.2 L682.2 79Z" stroke="#555" fill="#fff" stroke-width="0.7" /><path d="M698.6 59.6 V71" stroke="#666" fill="none" stroke-width="1" /><rect x="699.2" y="60.2" width="5.00" height="3.00" stroke="#888" fill="#fff" stroke-width="0.8" /><rect x="700.4" y="63" width="7.00" height="3.20" stroke="none" fill="#f2b25a" stroke-width="1" /><path d="M700.4 68.6 H706.4 M702.4 66.8 L700.4 68.6 L702.4 70.4" stroke="#3b6cbd" fill="none" stroke-width="1.1" /><rect x="697.6" y="77.2" width="11.00" height="11.00" stroke="#b8b8b8" fill="none" stroke-width="0.9" stroke-dasharray="1.4 1.2"/><rect x="699.6" y="80.8" width="5.00" height="5.40" stroke="#bdbdbd" fill="#f6f6f6" stroke-width="0.8" /><rect x="701.8" y="79" width="5.00" height="5.20" stroke="#bdbdbd" fill="#f6f6f6" stroke-width="0.8" /><path d="M702.6 97 V104 H697.2Z" stroke="#c2c2c2" fill="#f4f4f4" stroke-width="0.8" /><path d="M704 97 V104 H709.2Z" stroke="none" fill="#b9b9b9" stroke-width="1" /><path d="M699 97.6 A3 3 0 0 1 702 96" stroke="#c2c2c2" fill="none" stroke-width="0.7" /><path d="M685.2 528.6 L689.4 529.6 V536.4 L685.2 535.4Z M693.8 528.6 L689.6 529.6 V536.4 L693.8 535.4Z" stroke="#8a8a8a" fill="#c9c9c9" stroke-width="0.8" /><rect x="711.6" y="528" width="9.20" height="8.20" stroke="#777" fill="#9a9a9a" stroke-width="0.8" /><path d="M714 528 V536.2 M718.4 528 V536.2" stroke="#b5b5b5" fill="none" stroke-width="0.6" /><rect x="738.4" y="528.2" width="7.40" height="6.80" stroke="#8a8a8a" fill="#bdbdbd" stroke-width="0.8" /><circle cx="745.6" cy="534.6" r="2.3" stroke="#777" fill="#f1f1f1" stroke-width="0.8"/><rect x="760.8" y="531.8" width="4.80" height="1.00" stroke="none" fill="#555" stroke-width="1" /><rect x="769.6" y="532" width="81.00" height="0.80" stroke="none" fill="#a8a8a8" stroke-width="1" /><rect x="808.2" y="527.6" width="3.00" height="9.20" stroke="none" fill="#555" stroke-width="1" /><path d="M853.8 532.3 H860.2 M857 529.1 V535.5" stroke="#555" fill="none" stroke-width="1.3" /></svg>
<span class="t" style="left:128.6px;top:15.0px;font-size:14.5px;font-weight:bold;color:#fff;font-family:'Liberation Serif',serif">Ω</span>
<span class="t" style="left:170.8px;top:98.3px;font-size:9.6px;color:#444;letter-spacing:-0.5px">bc</span>
<span class="t" style="left:177.8px;top:93.1px;font-size:8px;color:#444;letter-spacing:-0.2px">a-</span>
</div></body></html>
